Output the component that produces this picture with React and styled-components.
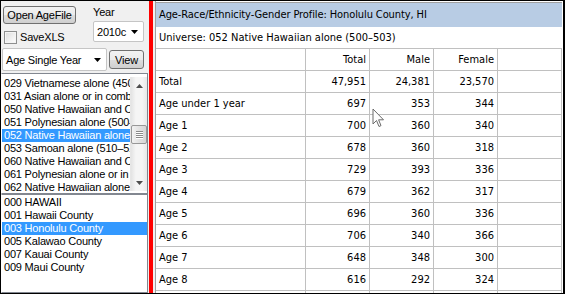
import React from 'react';
import styled, { createGlobalStyle } from 'styled-components';

const GlobalStyle = createGlobalStyle`
  html, body {
    margin: 0;
    padding: 0;
    background: #ffffff;
  }
  body {
    font-family: "Liberation Sans", Arial, sans-serif;
    font-size: 11px;
    color: #000;
  }
  * {
    box-sizing: border-box;
  }
`;

const Window = styled.div`
  position: relative;
  width: 565px;
  height: 294px;
  border: 1px solid #000;
  display: flex;
  overflow: hidden;
  background: #f0f0f0;
`;

const LeftPane = styled.div`
  width: 147px;
  flex: none;
  display: flex;
  flex-direction: column;
  background: #f0f0f0;
  letter-spacing: -0.2px;
`;

const Controls = styled.div`
  height: 72px;
  flex: none;
  display: flex;
  flex-direction: column;
`;

const TopRow = styled.div`
  display: flex;
  padding-left: 2px;
`;

const Column = styled.div`
  display: flex;
  flex-direction: column;
  width: ${p => p.$width}px;
  margin-left: ${p => p.$offset || 0}px;
`;

const Button = styled.div`
  display: flex;
  align-items: center;
  justify-content: center;
  width: ${p => p.$width}px;
  height: ${p => p.$height}px;
  margin-top: ${p => p.$top || 0}px;
  margin-left: ${p => p.$left || 0}px;
  border: 1px solid #707070;
  border-radius: 3px;
  background: linear-gradient(#f2f2f2 0%, #ebebeb 50%, #dddddd 51%, #cfcfcf 100%);
  font-size: 11px;
  flex: none;
`;

const CheckRow = styled.label`
  display: flex;
  align-items: center;
  gap: 3px;
  margin-top: 6px;
  margin-left: 1px;
  height: 14px;
`;

const CheckBox = styled.span`
  width: 13px;
  height: 13px;
  border: 1px solid #8e8f8f;
  background: linear-gradient(135deg, #dcdcdc, #ffffff);
  box-shadow: inset 0 0 0 1px #f4f4f4;
`;

const Label = styled.div`
  height: 14px;
  line-height: 14px;
  margin-top: 4px;
  margin-bottom: 2px;
`;

const Combo = styled.div`
  display: flex;
  align-items: center;
  justify-content: space-between;
  width: ${p => p.$width}px;
  height: ${p => p.$height}px;
  margin-left: ${p => p.$left || 0}px;
  padding: 0 5px 0 3px;
  background: #fff;
  border: 1px solid #c5c5c5;
  border-radius: 2px;
  flex: none;
`;

const SecondRow = styled.div`
  display: flex;
  align-items: center;
  margin-top: 4px;
  padding-left: 1px;
`;

const ListBox = styled.div`
  flex: none;
  height: ${p => p.$height}px;
  display: flex;
  background: #fff;
  border: 1px solid #828790;
  border-left-color: #ffffff;
  padding: ${p => p.$pad}px 0 2px 0;
  overflow: hidden;
`;

const Items = styled.div`
  flex: 1;
  min-width: 0;
  overflow: hidden;
`;

const Item = styled.div`
  height: 13px;
  line-height: 13px;
  padding-left: 2px;
  white-space: nowrap;
  overflow: hidden;
  background: ${p => (p.$selected ? '#3399ff' : 'transparent')};
  color: ${p => (p.$selected ? '#fff' : '#000')};
`;

const ScrollBar = styled.div`
  width: 17px;
  flex: none;
  display: flex;
  flex-direction: column;
  background: linear-gradient(90deg, #e3e3e3, #f5f5f5 30%, #f5f5f5 70%, #e8e8e8);
  border-left: 1px solid #e6e6e6;
`;

const ScrollButton = styled.div`
  height: 17px;
  display: flex;
  align-items: center;
  justify-content: center;
`;

const Track = styled.div`
  flex: 1;
  position: relative;
`;

const Thumb = styled.div`
  position: absolute;
  left: 0;
  right: 0;
  top: 31px;
  height: 19px;
  border: 1px solid #979797;
  border-radius: 2px;
  background: linear-gradient(90deg, #f2f2f2, #e2e2e2 50%, #d6d6d6);
  display: flex;
  flex-direction: column;
  align-items: center;
  justify-content: center;
  gap: 1px;
`;

const Grip = styled.span`
  width: 7px;
  height: 1px;
  background: #8a8a8a;
  box-shadow: 0 1px 0 #fff;
`;

const Splitter = styled.div`
  width: 7px;
  flex: none;
  background: #ff0000;
  border-left: 1px solid #f0f0f0;
  border-right: 2px solid #f0f0f0;
`;

const TablePane = styled.div`
  position: relative;
  flex: 1;
  background: #fff;
  border-left: 1px solid #a0a0a0;
  border-right: 1px solid #000;
  padding-top: 1px;
  overflow: hidden;
  font-family: "DejaVu Sans Condensed", "Liberation Sans", sans-serif;
  font-size: 11px;
`;

const Grid = styled.div`
  width: 406px;
  border-top: 1px solid #a0a0a0;
`;

const TitleRow = styled.div`
  height: 24px;
  line-height: 24px;
  padding-left: 3px;
  background: #b8cce4;
  white-space: nowrap;
  letter-spacing: -0.1px;
`;

const UniverseRow = styled.div`
  height: 22px;
  line-height: 21px;
  padding-left: 3px;
  border-bottom: 1px solid #c0c0c0;
  white-space: nowrap;
`;

const Row = styled.div`
  display: flex;
  height: 22px;
  border-bottom: 1px solid #c0c0c0;
`;

const Cell = styled.div`
  width: ${p => (p.$label ? 150 : 64)}px;
  flex: none;
  height: 21px;
  line-height: 21px;
  padding: 0 3px;
  border-right: 1px solid #c0c0c0;
  text-align: ${p => (p.$label ? 'left' : 'right')};
  white-space: nowrap;
  overflow: hidden;
`;

const Cursor = styled.svg`
  position: absolute;
  left: 216px;
  top: 107px;
`;

const Arrow = ({ up, color = '#000' }) => (
  <svg width="7" height="4" viewBox="0 0 7 4">
    <path d={up ? 'M0 4 L3.5 0 L7 4 Z' : 'M0 0 L7 0 L3.5 4 Z'} fill={color} />
  </svg>
);

const races = [
  '029 Vietnamese alone (450)',
  '031 Asian alone or in combination',
  '050 Native Hawaiian and Other Pacific Islander',
  '051 Polynesian alone (500–503)',
  '052 Native Hawaiian alone (500–503)',
  '053 Samoan alone (510–511)',
  '060 Native Hawaiian and Other Pacific Islander',
  '061 Polynesian alone or in combination',
  '062 Native Hawaiian alone or in combination',
];

const counties = [
  '000 HAWAII',
  '001 Hawaii County',
  '003 Honolulu County',
  '005 Kalawao County',
  '007 Kauai County',
  '009 Maui County',
];

const rows = [
  ['Total', '47,951', '24,381', '23,570'],
  ['Age under 1 year', '697', '353', '344'],
  ['Age 1', '700', '360', '340'],
  ['Age 2', '678', '360', '318'],
  ['Age 3', '729', '393', '336'],
  ['Age 4', '679', '362', '317'],
  ['Age 5', '696', '360', '336'],
  ['Age 6', '706', '340', '366'],
  ['Age 7', '648', '348', '300'],
  ['Age 8', '616', '292', '324'],
  ['Age 9', '671', '341', '330'],
];

export default function App() {
  return (
    <>
      <GlobalStyle />
      <Window>
        <LeftPane>
          <Controls>
            <TopRow>
              <Column $width={88}>
                <Button $width={73} $height={18} $top={5}>Open AgeFile</Button>
                <CheckRow>
                  <CheckBox />
                  <span>SaveXLS</span>
                </CheckRow>
              </Column>
              <Column $width={51} $offset={2}>
                <Label>Year</Label>
                <Combo $width={51} $height={21}>
                  <span>2010c</span>
                  <Arrow />
                </Combo>
              </Column>
            </TopRow>
            <SecondRow>
              <Combo $width={105} $height={23}>
                <span>Age Single Year</span>
                <Arrow />
              </Combo>
              <Button $width={35} $height={19} $left={2}>View</Button>
            </SecondRow>
          </Controls>
          <ListBox $height={121} $pad={3}>
            <Items>
              {races.map(r => (
                <Item key={r} $selected={r.startsWith('052')}>{r}</Item>
              ))}
            </Items>
            <ScrollBar>
              <ScrollButton><Arrow up color="#4d4d4d" /></ScrollButton>
              <Track>
                <Thumb>
                  <Grip />
                  <Grip />
                  <Grip />
                  <Grip />
                </Thumb>
              </Track>
              <ScrollButton><Arrow color="#4d4d4d" /></ScrollButton>
            </ScrollBar>
          </ListBox>
          <ListBox $height={99} $pad={1}>
            <Items>
              {counties.map(c => (
                <Item key={c} $selected={c.startsWith('003')}>{c}</Item>
              ))}
            </Items>
          </ListBox>
        </LeftPane>
        <Splitter />
        <TablePane>
          <Grid>
            <TitleRow>Age-Race/Ethnicity-Gender Profile: Honolulu County, HI</TitleRow>
            <UniverseRow>Universe: 052 Native Hawaiian alone (500–503)</UniverseRow>
            <Row>
              <Cell $label />
              <Cell>Total</Cell>
              <Cell>Male</Cell>
              <Cell>Female</Cell>
              <Cell />
            </Row>
            {rows.map(r => (
              <Row key={r[0]}>
                <Cell $label>{r[0]}</Cell>
                <Cell>{r[1]}</Cell>
                <Cell>{r[2]}</Cell>
                <Cell>{r[3]}</Cell>
                <Cell />
              </Row>
            ))}
          </Grid>
          <Cursor width="13" height="21" viewBox="0 0 13 21">
            <path
              d="M1 1 L1 16 L4.5 12.5 L7 18.5 L9 17.6 L6.6 11.8 L11.5 11.8 Z"
              fill="#fff"
              stroke="#6b6b6b"
              strokeWidth="1"
              strokeLinejoin="miter"
            />
          </Cursor>
        </TablePane>
      </Window>
    </>
  );
}
